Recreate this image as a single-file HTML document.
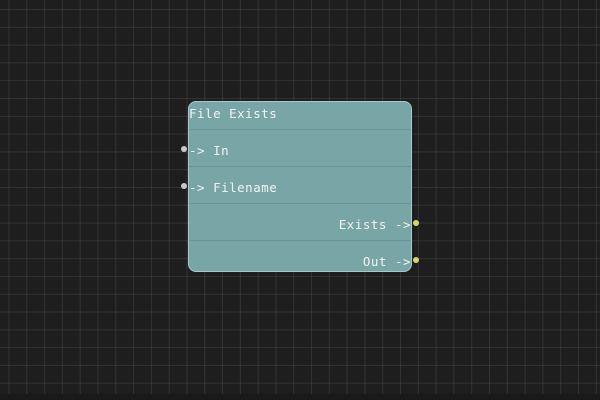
<!DOCTYPE html>
<html><head><style>
html,body{margin:0;padding:0}
body{width:600px;height:400px;overflow:hidden;background-color:#1e1e1e;
background-image:linear-gradient(to right,rgba(255,255,255,0.09) 1px,transparent 1px),linear-gradient(to bottom,rgba(255,255,255,0.09) 1px,transparent 1px);
background-size:17.8px 17.8px;background-position:8.5px 9px;position:relative;font-family:"DejaVu Sans Mono","Liberation Mono",monospace}
.node{position:absolute;left:188px;top:101px;width:222px;height:169px;background:#78a5a5;border:1px solid #a9c9c9;border-radius:8px;overflow:hidden}
.row{position:absolute;left:0;width:100%;height:37px;border-bottom:1px solid #6a9494;color:#f4f4f4;font-size:12.5px;letter-spacing:0.5px;line-height:24px;box-sizing:border-box}
.l{padding-left:0}.r{text-align:right;padding-right:0;line-height:32px}
.dot{position:absolute;width:6px;height:6px;border-radius:50%}
.g{background:#c8c8c8}.y{background:#d8d86a}
.bot{position:absolute;left:0;top:394px;width:600px;height:6px;background:#1a1a1a}
</style></head><body>
<div class="node">
<div class="row l" style="top:0;height:28px;line-height:24px">File Exists</div>
<div class="row l" style="top:28px;line-height:42px">-&gt; In</div>
<div class="row l" style="top:65px;line-height:42px">-&gt; Filename</div>
<div class="row r" style="top:102px;line-height:42px">Exists -&gt;</div>
<div class="row r" style="top:139px;border:none;line-height:42px">Out -&gt;</div>
</div>
<div class="dot g" style="left:181px;top:146px"></div>
<div class="dot g" style="left:181px;top:183px"></div>
<div class="dot y" style="left:413px;top:220px"></div>
<div class="dot y" style="left:413px;top:257px"></div>
<div class="bot"></div>
</body></html>
